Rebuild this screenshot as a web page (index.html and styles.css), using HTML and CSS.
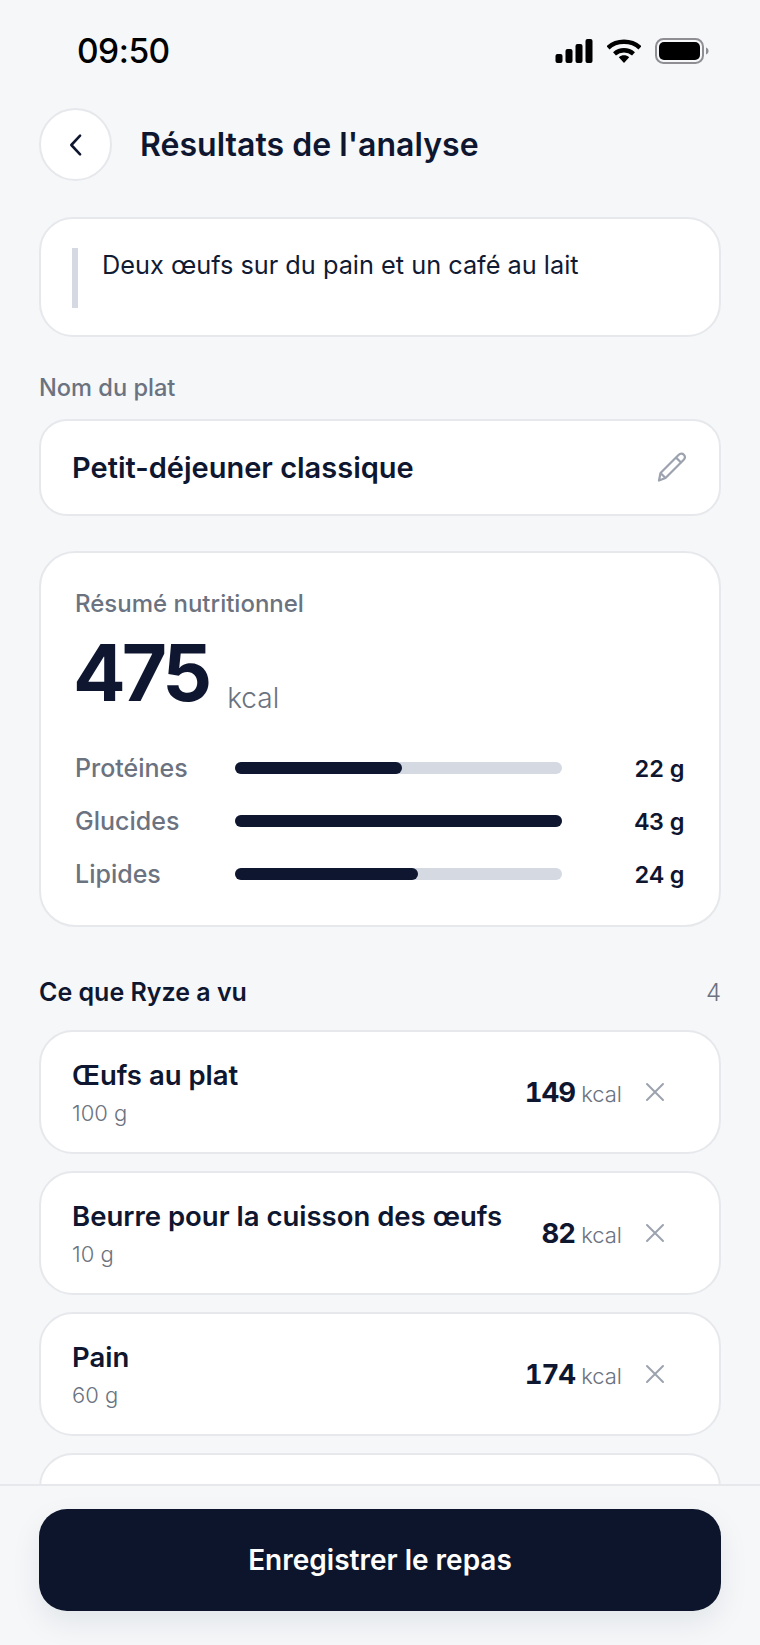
FILE: index.html
```html
<!DOCTYPE html>
<html lang="fr">
<head>
<meta charset="utf-8">
<title>Résultats de l'analyse</title>
<link rel="stylesheet" href="styles.css">
</head>
<body>
<div class="screen">
  <div class="status">
    <span class="time">09:50</span>
    <div class="status-icons">
      <svg class="signal" viewBox="0 0 38 24" width="38" height="24"><rect x="0.500" y="15" width="7" height="9" rx="2"/><rect x="10.500" y="10" width="7" height="14" rx="2"/><rect x="20.500" y="5" width="7" height="19" rx="2"/><rect x="30.500" y="0" width="7" height="24" rx="2"/></svg>
      <svg class="wifi" viewBox="0 0 34 24" width="34" height="24"><path d="M1 8.800C9.500 .8 24.500 .8 33 8.800" fill="none" stroke="#000" stroke-width="4.400"/><path d="M7.500 14.800C13 10 21 10 26.500 14.800" fill="none" stroke="#000" stroke-width="4.400"/><path d="M11.800 18.200C15 15.600 19 15.600 22.200 18.200L17 24Z"/></svg>
      <svg class="battery" viewBox="0 0 54 26" width="54" height="26"><rect x="1" y="1" width="47" height="24" rx="7.500" fill="none" stroke="#8e8e93" stroke-width="2"/><rect x="4" y="4" width="41" height="18" rx="5"/><path d="M51 9.500c1.500.5 2.500 1.800 2.500 3.500s-1 3-2.500 3.500z" fill="#8e8e93"/></svg>
    </div>
  </div>

  <header class="head">
    <button class="back" type="button" aria-label="Retour">
      <svg viewBox="0 0 24 24" width="28" height="28"><path d="M15.500 4 8 12 15.500 20" fill="none" stroke="#0e1630" stroke-width="2.200" stroke-linecap="round" stroke-linejoin="round"/></svg>
    </button>
    <h1 class="title">Résultats de l'analyse</h1>
  </header>

  <section class="card quote">
    <p class="quote-text">Deux œufs sur du pain et un café au lait</p>
  </section>

  <label class="field-label">Nom du plat</label>
  <section class="card dish">
    <span class="dish-name">Petit-déjeuner classique</span>
    <svg class="pencil" viewBox="0 0 30 30" width="30" height="30"><path d="M2 28.500 3.500 21 21.500 3c1.700-1.700 4-1.700 5.300-.3s1.400 3.600-.3 5.300L8.500 26z" fill="none" stroke="#9ca3af" stroke-width="2.200" stroke-linejoin="round"/><path d="M19 5.500 24.500 11M3.500 21 8.500 26" fill="none" stroke="#9ca3af" stroke-width="2.200"/></svg>
  </section>

  <section class="card summary">
    <div class="summary-label">Résumé nutritionnel</div>
    <div class="total"><span class="total-num">475</span><span class="total-unit">kcal</span></div>
    <div class="macros">
      <div class="macro">
        <span class="macro-name">Protéines</span>
        <div class="track"><div class="fill" style="width:51%"></div></div>
        <span class="macro-val">22 g</span>
      </div>
      <div class="macro">
        <span class="macro-name">Glucides</span>
        <div class="track"><div class="fill" style="width:100%"></div></div>
        <span class="macro-val">43 g</span>
      </div>
      <div class="macro">
        <span class="macro-name">Lipides</span>
        <div class="track"><div class="fill" style="width:56%"></div></div>
        <span class="macro-val">24 g</span>
      </div>
    </div>
  </section>

  <div class="section-head">
    <h2 class="section-title">Ce que Ryze a vu</h2>
    <span class="section-count">4</span>
  </div>

  <div class="items">
    <article class="card item">
      <div class="item-main"><div class="item-name">Œufs au plat</div><div class="item-qty">100 g</div></div>
      <div class="item-kcal"><strong>149</strong><span>kcal</span></div>
      <svg class="remove" viewBox="0 0 20 20" width="20" height="20"><path d="M2 2 18 18M18 2 2 18" stroke="#9ca3af" stroke-width="2" fill="none" stroke-linecap="round"/></svg>
    </article>
    <article class="card item">
      <div class="item-main"><div class="item-name">Beurre pour la cuisson des œufs</div><div class="item-qty">10 g</div></div>
      <div class="item-kcal"><strong>82</strong><span>kcal</span></div>
      <svg class="remove" viewBox="0 0 20 20" width="20" height="20"><path d="M2 2 18 18M18 2 2 18" stroke="#9ca3af" stroke-width="2" fill="none" stroke-linecap="round"/></svg>
    </article>
    <article class="card item">
      <div class="item-main"><div class="item-name">Pain</div><div class="item-qty">60 g</div></div>
      <div class="item-kcal"><strong>174</strong><span>kcal</span></div>
      <svg class="remove" viewBox="0 0 20 20" width="20" height="20"><path d="M2 2 18 18M18 2 2 18" stroke="#9ca3af" stroke-width="2" fill="none" stroke-linecap="round"/></svg>
    </article>
    <article class="card item"></article>
  </div>

  <footer class="footer">
    <button class="save" type="button">Enregistrer le repas</button>
  </footer>
</div>
</body>
</html>
```
FILE: styles.css
```css
* { box-sizing: border-box; margin: 0; padding: 0; }
html, body { background: #f5f7f9; }
body { font-family: Inter, "Noto Sans", sans-serif; color: #0e1630; }
.screen { position: relative; width: 760px; height: 1645px; overflow: hidden; padding: 0 39px; background: #f5f7f9; }

.status { display: flex; justify-content: space-between; align-items: center; height: 50px; margin-top: 26px; padding: 0 12px 0 38px; }
.time { display: block; font-size: 33.500px; font-weight: 500; color: #000; letter-spacing: -0.5px; }
.status-icons { display: flex; align-items: center; gap: 14px; }
.signal, .wifi path:last-child { fill: #000; }
.battery { fill: #000; }

.head { display: flex; align-items: center; gap: 28px; margin-top: 32px; }
.back { width: 73px; height: 73px; border-radius: 50%; background: #fff; border: 2px solid #e6e8ec; display: flex; align-items: center; justify-content: center; }
.title { font-size: 32px; font-weight: 600; letter-spacing: 0.03px; color: #0e1630; }

.card { background: #fff; border: 2px solid #e6e8ec; }

.quote { height: 120px; margin-top: 36px; border-radius: 34px; padding: 29px 31px; }
.quote-text { border-left: 6px solid #d5d9e1; padding-left: 24px; min-height: 60px; font-size: 25.300px; line-height: 34px; color: #111a33; }

.field-label { display: block; margin-top: 37px; font-size: 23.600px; line-height: 28px; font-weight: 500; color: #6b7280; }

.dish { display: flex; justify-content: space-between; align-items: center; height: 97px; margin-top: 17px; border-radius: 28px; padding: 0 32px 1px 31px; }
.dish-name { font-size: 29px; font-weight: 600; color: #0e1630; }

.summary { height: 376px; margin-top: 35px; border-radius: 36px; padding: 37px 35px 0 34px; }
.summary-label { font-size: 24px; line-height: 28px; font-weight: 500; color: #6b7280; }
.total { margin: 9px 0 0 -2px; height: 92px; white-space: nowrap; }
.total-num { font-size: 78px; line-height: 92px; font-weight: 700; letter-spacing: -4px; color: #0e1630; }
.total-unit { margin-left: 19px; font-size: 28px; line-height: 28px; font-weight: 300; color: #6b7280; vertical-align: -7px; }
.macros { display: flex; flex-direction: column; gap: 23px; margin-top: 34px; }
.macro { display: grid; grid-template-columns: 160px 327px 1fr; align-items: center; height: 30px; }
.macro-name { font-size: 25px; font-weight: 500; color: #6b7280; }
.track { height: 12px; border-radius: 6px; background: #d5d9e1; }
.fill { height: 12px; border-radius: 6px; background: #0e1630; }
.macro-val { text-align: right; font-size: 23.500px; font-weight: 600; font-variant-numeric: tabular-nums; letter-spacing: -0.4px; color: #0e1630; }

.section-head { display: flex; justify-content: space-between; align-items: center; margin-top: 48px; height: 34px; }
.section-title { font-size: 25px; font-weight: 600; color: #0e1630; }
.section-count { font-size: 24px; font-weight: 300; color: #6b7280; }

.items { display: flex; flex-direction: column; gap: 17px; margin-top: 21px; }
.item { display: flex; align-items: center; height: 124px; border-radius: 34px; padding: 0 54px 0 31px; flex: none; }
.item-main { flex: 1; min-width: 0; }
.item-name { font-size: 27.500px; line-height: 36px; font-weight: 600; color: #0e1630; }
.item-qty { margin-top: 5px; font-size: 22px; line-height: 30px; font-weight: 300; color: #6b7280; }
.item-kcal { display: flex; align-items: baseline; gap: 6px; }
.item-kcal strong { font-size: 27.500px; font-weight: 700; font-variant-numeric: tabular-nums; letter-spacing: -1px; color: #0e1630; }
.item-kcal span { font-size: 22px; font-weight: 300; color: #6b7280; }
.remove { margin-left: 23px; flex: none; }

.footer { position: absolute; left: 0; right: 0; bottom: 0; height: 161px; padding: 23px 39px 0; background: #f5f7f9; border-top: 2px solid #e6e8ec; }
.save { width: 100%; height: 102px; border: 0; border-radius: 28px; background: #0c152b; color: #fff; font-family: inherit; font-size: 28px; font-weight: 600; box-shadow: 0 12px 30px rgba(15, 23, 46, 0.08); }
```
